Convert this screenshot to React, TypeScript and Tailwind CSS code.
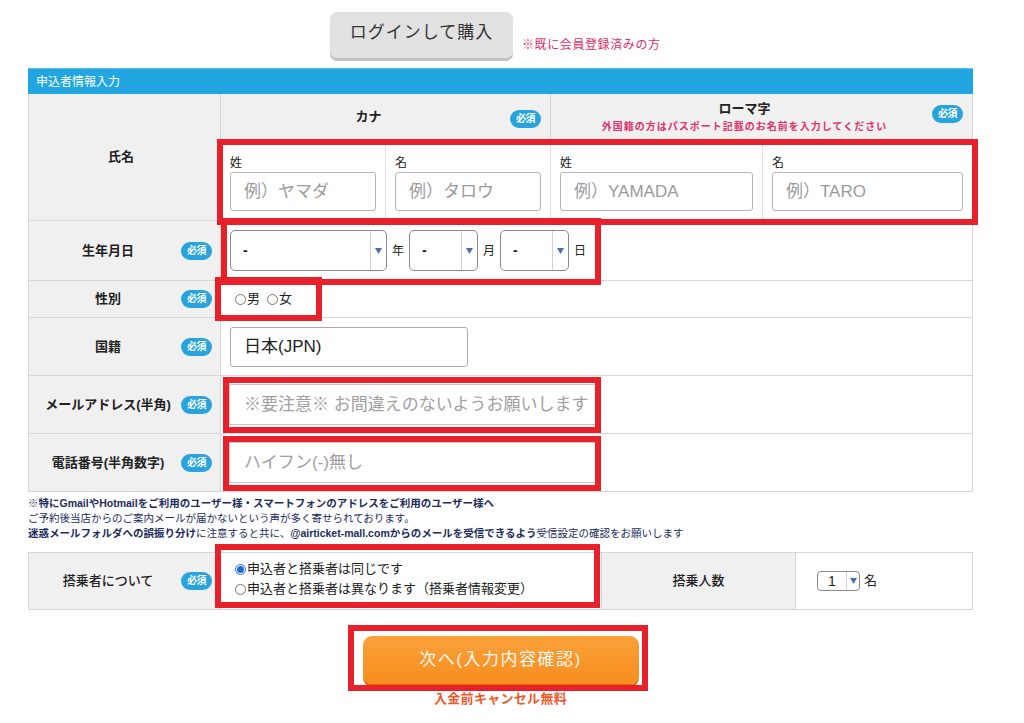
import React from "react";

const FONT = { fontFamily: '"Liberation Sans", "Noto Sans CJK JP", "Noto Sans", sans-serif' };

const Badge = () => (
  <span className="inline-flex items-center justify-center w-[31px] h-[18px] rounded-full bg-[#27a4dd] text-white text-[10px] font-bold leading-none tracking-[-0.5px]">
    必須
  </span>
);

const LabelCell = ({ children, badge = true }: { children: React.ReactNode; badge?: boolean }) => (
  <div className="w-[192px] shrink-0 bg-[#f0f0f0] border-r border-[#d6d6d6] flex items-center">
    <div className="w-[152px] pl-[6px] text-center text-[13px] font-bold text-[#222] whitespace-nowrap">{children}</div>
    {badge && <Badge />}
  </div>
);

const Arrow = () => (
  <svg width="7" height="6" viewBox="0 0 7 6">
    <polygon points="0,0 7,0 3.5,6" fill="#4a6fb5" />
  </svg>
);

const Select = ({ className }: { className: string }) => (
  <div className={"h-[41px] border border-[#8a8a8a] rounded-[5px] flex items-stretch bg-white " + className}>
    <div className="flex-1 flex items-center pl-[12px] font-bold text-[14px] text-[#222]">-</div>
    <div className="w-[16px] border-l border-[#d0d0d0] flex items-center justify-center">
      <Arrow />
    </div>
  </div>
);

const Radio = ({ checked = false }: { checked?: boolean }) =>
  checked ? (
    <span className="inline-flex w-[11px] h-[11px] rounded-full border border-[#2b6fd6] items-center justify-center bg-white">
      <span className="w-[7px] h-[7px] rounded-full bg-[#1f6ad8]" />
    </span>
  ) : (
    <span className="inline-block w-[11px] h-[11px] rounded-full border border-[#777] bg-white" />
  );

const NameCell = ({ label, ph, className }: { label: string; ph: string; className: string }) => (
  <div className={"flex flex-col pt-[14px] pl-[9px] pr-[9px] " + className}>
    <div className="text-[12px] leading-[18px] h-[18px] text-[#222]">{label}</div>
    <div className="h-[39px] border border-[#b5b5b5] rounded-[3px] flex items-center pl-[13px] text-[17px] text-[#9a9a9a] bg-white whitespace-nowrap">
      {ph}
    </div>
  </div>
);

const RedBox = ({ className }: { className: string }) => (
  <div className={"absolute border-[6px] border-[#e8202a] pointer-events-none " + className} />
);

export default function App() {
  return (
    <div className="relative w-[1024px] h-[723px] overflow-hidden bg-white text-[#222]" style={FONT}>
      {/* top login */}
      <div className="h-[68px] flex items-start pl-[330px] pt-[12px]">
        <div className="w-[183px] h-[46px] rounded-[7px] bg-[#e1e1e1] shadow-[0_3px_0_#c2c2c2] flex items-center justify-center text-[17px] text-[#333] tracking-[1px] pb-[4px]">
          ログインして購入
        </div>
        <div className="ml-[9px] mt-[24px] text-[12px] text-[#e0306a] tracking-[0.6px]">※既に会員登録済みの方</div>
      </div>

      <div className="ml-[28px] w-[945px]">
        {/* header */}
        <div className="h-[26px] bg-[#22a6e2] border-t border-[#5cc0ee] flex items-center pl-[8px] text-[12px] text-white">
          申込者情報入力
        </div>

        <div className="border-l border-r border-[#d6d6d6]">
          {/* name row */}
          <div className="flex h-[127px] border-b border-[#d6d6d6]">
            <div className="w-[192px] shrink-0 bg-[#f0f0f0] border-r border-[#d6d6d6] flex items-center">
              <div className="w-[184px] text-center text-[13px] font-bold">氏名</div>
            </div>
            <div className="flex-1 flex flex-col">
              <div className="h-[46px] flex bg-[#f0f0f0] border-b border-[#d6d6d6]">
                <div className="relative w-[330px] border-r border-[#d6d6d6] flex items-center justify-center pr-[34px] text-[13px] font-bold">
                  カナ
                  <div className="absolute right-[9px] top-[14px]">
                    <Badge />
                  </div>
                </div>
                <div className="relative flex-1 flex flex-col items-center pt-[5px] pr-[34px]">
                  <div className="text-[13px] font-bold leading-[20px]">ローマ字</div>
                  <div className="text-[10px] font-bold text-[#e0306a] leading-[15px] tracking-[1px]">
                    外国籍の方はパスポート記載のお名前を入力してください
                  </div>
                  <div className="absolute right-[9px] top-[6px]">
                    <Badge />
                  </div>
                </div>
              </div>
              <div className="flex-1 flex bg-white">
                <NameCell label="姓" ph="例）ヤマダ" className="w-[165px] border-r border-[#e0e0e0]" />
                <NameCell label="名" ph="例）タロウ" className="w-[165px] border-r border-[#e0e0e0]" />
                <NameCell label="姓" ph="例）YAMADA" className="w-[212px] border-r border-[#e0e0e0]" />
                <NameCell label="名" ph="例）TARO" className="flex-1" />
              </div>
            </div>
          </div>

          {/* birth */}
          <div className="flex h-[60px] border-b border-[#d6d6d6]">
            <LabelCell>生年月日</LabelCell>
            <div className="flex-1 flex items-center pl-[9px] text-[12px]">
              <Select className="w-[157px]" />
              <span className="mx-[5px]">年</span>
              <Select className="w-[69px]" />
              <span className="mx-[5px]">月</span>
              <Select className="w-[69px]" />
              <span className="ml-[5px]">日</span>
            </div>
          </div>

          {/* gender */}
          <div className="flex h-[37px] border-b border-[#d6d6d6]">
            <LabelCell>性別</LabelCell>
            <div className="flex-1 flex items-center pl-[14px] text-[13px]">
              <Radio />
              <span className="ml-[1px]">男</span>
              <span className="ml-[7px]" />
              <Radio />
              <span className="ml-[1px]">女</span>
            </div>
          </div>

          {/* nationality */}
          <div className="flex h-[58px] border-b border-[#d6d6d6]">
            <LabelCell>国籍</LabelCell>
            <div className="flex-1 flex items-center pl-[9px]">
              <div className="w-[238px] h-[40px] border border-[#aaa] rounded-[3px] flex items-center pl-[13px] text-[17px] text-[#222]">
                日本(JPN)
              </div>
            </div>
          </div>

          {/* email */}
          <div className="flex h-[58px] border-b border-[#d6d6d6]">
            <LabelCell>メールアドレス(半角)</LabelCell>
            <div className="flex-1 flex items-center pl-[8px]">
              <div className="w-[369px] h-[41px] border border-[#c8c8c8] flex items-center pl-[14px] text-[17px] text-[#a0a0a0] whitespace-nowrap overflow-hidden">
                ※要注意※ お間違えのないようお願いします
              </div>
            </div>
          </div>

          {/* phone */}
          <div className="flex h-[58px] border-b border-[#d6d6d6]">
            <LabelCell>電話番号(半角数字)</LabelCell>
            <div className="flex-1 flex items-center pl-[8px]">
              <div className="w-[369px] h-[41px] border border-[#c8c8c8] flex items-center pl-[14px] text-[17px] text-[#a0a0a0]">
                ハイフン(-)無し
              </div>
            </div>
          </div>
        </div>

        {/* notes */}
        <div className="pt-[4px] text-[10.5px] leading-[15px] text-[#1c2b5e] whitespace-nowrap">
          <div className="font-bold">※特にGmailやHotmailをご利用のユーザー様・スマートフォンのアドレスをご利用のユーザー様へ</div>
          <div>ご予約後当店からのご案内メールが届かないという声が多く寄せられております。</div>
          <div>
            <span className="font-bold">迷惑メールフォルダへの誤振り分け</span>
            <span>に注意すると共に、</span>
            <span className="font-bold">@airticket-mall.comからのメールを受信できるよう</span>
            <span>受信設定の確認をお願いします</span>
          </div>
        </div>

        {/* passenger */}
        <div className="mt-[11px] flex h-[58px] border border-[#d6d6d6]">
          <div className="w-[192px] shrink-0 bg-[#f0f0f0] border-r border-[#d6d6d6] flex items-center">
            <div className="w-[152px] pl-[6px] text-center text-[13px] font-medium">搭乗者について</div>
            <Badge />
          </div>
          <div className="w-[380px] bg-white flex flex-col justify-center pl-[14px] pb-[4px] text-[13px] leading-[20px]">
            <div className="flex items-center">
              <Radio checked />
              <span className="ml-[1px]">申込者と搭乗者は同じです</span>
            </div>
            <div className="flex items-center">
              <Radio />
              <span className="ml-[1px]">申込者と搭乗者は異なります（搭乗者情報変更）</span>
            </div>
          </div>
          <div className="w-[195px] bg-[#f0f0f0] border-l border-r border-[#d6d6d6] flex items-center justify-center text-[13px] font-medium">
            搭乗人数
          </div>
          <div className="flex-1 bg-white flex items-center pl-[21px] text-[13px]">
            <div className="w-[43px] h-[20px] border border-[#888] rounded-[4px] flex items-stretch">
              <div className="flex-1 flex items-center justify-center text-[14px]">1</div>
              <div className="w-[13px] border-l border-[#d0d0d0] flex items-center justify-center">
                <Arrow />
              </div>
            </div>
            <span className="ml-[4px]">名</span>
          </div>
        </div>

        {/* submit */}
        <div className="mt-[26px] flex flex-col items-center">
          <div className="w-[276px] h-[48px] rounded-[9px] bg-gradient-to-b from-[#fba13a] to-[#f68d1c] shadow-[0_3px_0_#e86a06] flex items-center justify-center text-[#fff8ee] text-[17px] tracking-[1.5px]">
            次へ(入力内容確認)
          </div>
          <div className="mt-[5px] text-[13px] font-bold text-[#ec5a2a] tracking-[0.3px]">入金前キャンセル無料</div>
        </div>
      </div>

      {/* red annotation boxes */}
      <RedBox className="left-[217px] top-[139px] w-[761px] h-[86px]" />
      <RedBox className="left-[221px] top-[218px] w-[380px] h-[67px]" />
      <RedBox className="left-[215px] top-[277px] w-[107px] h-[44px]" />
      <RedBox className="left-[223px] top-[377px] w-[378px] h-[56px]" />
      <RedBox className="left-[223px] top-[436px] w-[378px] h-[55px]" />
      <RedBox className="left-[215px] top-[544px] w-[385px] h-[64px]" />
      <RedBox className="left-[348px] top-[625px] w-[300px] h-[66px]" />
    </div>
  );
}
